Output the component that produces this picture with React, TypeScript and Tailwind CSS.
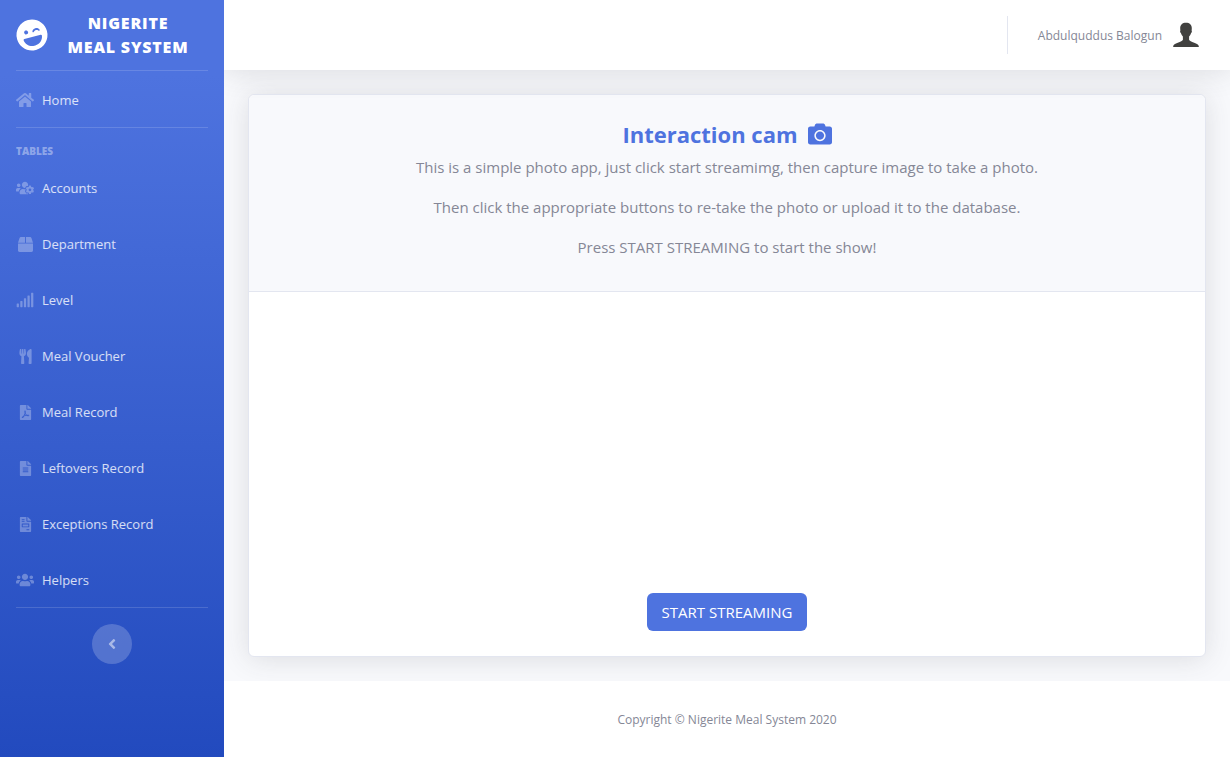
import React from "react";
import type { IconType } from "react-icons";
import {
  FaAngleLeft,
  FaBox,
  FaCamera,
  FaFileAlt,
  FaFileInvoice,
  FaFilePdf,
  FaHome,
  FaLaughWink,
  FaSignal,
  FaUsers,
  FaUsersCog,
  FaUtensils,
} from "react-icons/fa";

type NavEntry = { label: string; icon: IconType; wide?: boolean };

const tables: NavEntry[] = [
  { label: "Accounts", icon: FaUsersCog, wide: true },
  { label: "Department", icon: FaBox },
  { label: "Level", icon: FaSignal, wide: true },
  { label: "Meal Voucher", icon: FaUtensils },
  { label: "Meal Record", icon: FaFilePdf },
  { label: "Leftovers Record", icon: FaFileAlt },
  { label: "Exceptions Record", icon: FaFileInvoice },
  { label: "Helpers", icon: FaUsers, wide: true },
];

function NavLink({ label, icon: Icon, wide }: NavEntry) {
  return (
    <a href="#" className="flex items-center gap-2 px-4 text-[13px] leading-6 text-white/80">
      <span className="flex w-[18px] justify-center text-white/30">
        <Icon className={wide ? "size-[18px]" : "size-[15px]"} aria-hidden="true" />
      </span>
      {label}
    </a>
  );
}

function Sidebar() {
  return (
    <aside className="relative z-10 flex w-56 shrink-0 flex-col bg-linear-to-b from-[#4e73df] from-10% to-[#224abe]">
      <a href="#" className="flex h-[70px] items-center px-4 text-white">
        <FaLaughWink className="size-8 shrink-0 -rotate-15" aria-hidden="true" />
        <span className="flex-1 text-center text-base leading-6 font-extrabold tracking-wider uppercase">
          Nigerite
          <br />
          Meal System
        </span>
      </a>
      <hr className="mx-4 border-white/15" />
      <nav className="flex flex-col">
        <div className="pt-[17px] pb-[15px]">
          <NavLink label="Home" icon={FaHome} wide />
        </div>
        <hr className="mx-4 border-white/15" />
        <h2 className="mt-4 px-4 text-[10px] leading-[15px] font-extrabold text-white/40 uppercase">
          Tables
        </h2>
        <ul className="mt-[17px] mb-4 flex flex-col gap-8">
          {tables.map((entry) => (
            <li key={entry.label}>
              <NavLink {...entry} />
            </li>
          ))}
        </ul>
      </nav>
      <hr className="mx-4 -mt-px border-white/15" />
      <button
        type="button"
        aria-label="Toggle sidebar"
        className="mt-4 flex size-10 items-center justify-center self-center rounded-full bg-white/20 text-base text-white/50"
      >
        <FaAngleLeft aria-hidden="true" />
      </button>
    </aside>
  );
}

function Avatar() {
  return (
    <svg viewBox="0 0 32 32" className="size-8" aria-hidden="true">
      <path
        fill="#41413f"
        d="M16 2.800c-3.600 0-5.800 2-5.800 5.500 0 .8.100 1.500.200 2.200-.5.500-.4 2 .5 2.600.4 1.500 1.100 2.600 2 3.500v3.200c-.3 1.300-2.400 1.900-5.100 2.900-2.600 1-4.500 1.800-4.700 3.700 0 .4.400.5 1 .5h23.800c.6 0 1-.1 1-.5-.2-1.900-2.100-2.700-4.700-3.700-2.700-1-4.800-1.600-5.100-2.900v-3.200c.9-.9 1.600-2 2-3.500.9-.6 1-2.100.5-2.600.1-.7.200-1.400.2-2.200 0-3.500-2.200-5.500-5.800-5.500z"
      />
    </svg>
  );
}

function Topbar() {
  return (
    <header className="relative flex h-[70px] items-center justify-end bg-white pr-7 shadow-[0_2px_28px_0_rgba(58,59,69,0.15)]">
      <div className="mr-[30px] h-[38px] w-px bg-[#e3e6f0]" />
      <button type="button" className="flex items-center gap-2 pt-0.5 text-xs text-[#858796]">
        Abdulquddus Balogun
        <Avatar />
      </button>
    </header>
  );
}

export default function App() {
  return (
    <div className="flex min-h-screen bg-[#f8f9fc] font-['Segoe_UI','Open_Sans',sans-serif] text-[#858796]">
      <Sidebar />
      <div className="flex min-w-0 flex-1 flex-col">
        <Topbar />
        <main className="flex flex-1 flex-col p-6">
          <section className="flex flex-1 flex-col rounded-md border border-[#e3e6f0] bg-white text-center shadow-[0_2px_28px_0_rgba(58,59,69,0.15)]">
            <div className="flex flex-col gap-4 rounded-t-md border-b border-[#e3e6f0] bg-[#f8f9fc] px-5 pt-6 pb-8 text-[15px] leading-6">
              <div>
                <h1 className="mb-1.5 flex items-center justify-center gap-2.5 text-[22px] leading-[30px] font-bold text-[#4e73df]">
                  Interaction cam
                  <FaCamera className="size-6" aria-hidden="true" />
                </h1>
                <p>
                  This is a simple photo app, just click start streamimg, then capture image to take a photo.
                </p>
              </div>
              <p>Then click the appropriate buttons to re-take the photo or upload it to the database.</p>
              <p>Press START STREAMING to start the show!</p>
            </div>
            <div className="flex min-h-90 flex-1 flex-col items-center justify-end px-6 pb-[25px]">
              <button
                type="button"
                className="h-[38px] rounded-md bg-[#4e73df] px-[15px] text-[15px] leading-6 text-white"
              >
                START STREAMING
              </button>
            </div>
          </section>
        </main>
        <footer className="relative flex h-[76px] items-center justify-center bg-white pt-0.5 text-xs">
          Copyright © Nigerite Meal System 2020
        </footer>
      </div>
    </div>
  );
}
